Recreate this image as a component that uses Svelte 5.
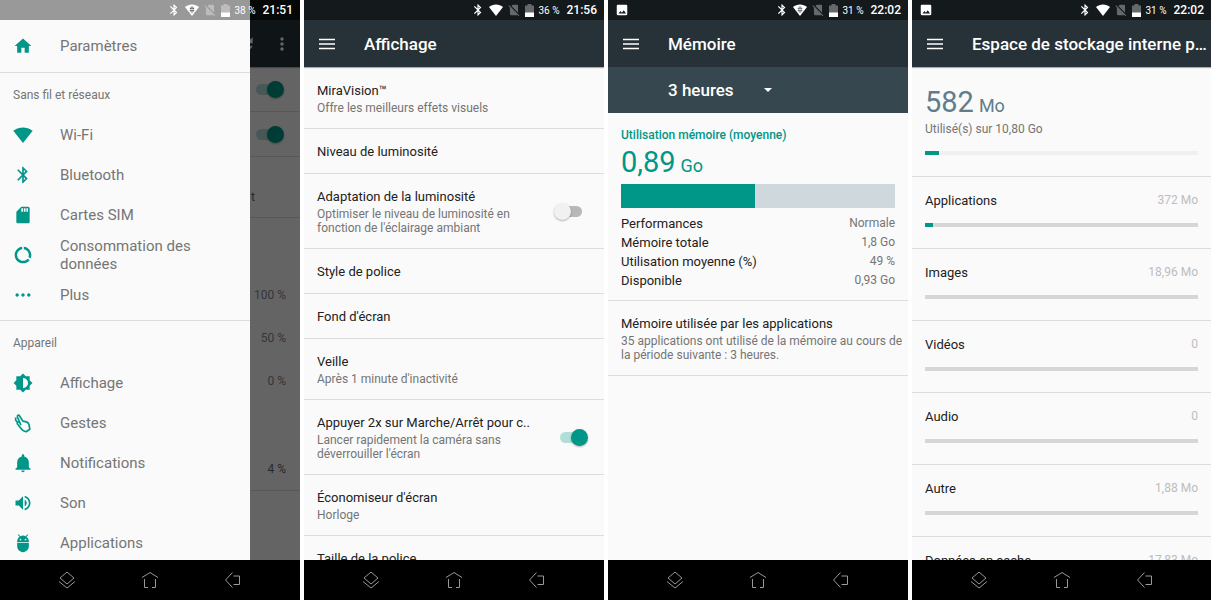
<script lang="ts">
    type Status = { battery: number; time: string; picture: boolean; wifiData: boolean };
    type Entry = { icon: string; label: string };
    type Setting = { title: string; summary?: string; toggle?: boolean; checked?: boolean };

    const icons: Record<string, string> = {
        home: 'M10 20v-6h4v6h5v-8h3L12 3 2 12h3v8z',
        wifi: 'M12.01 21.49L23.64 7c-.45-.34-4.93-4-11.64-4C5.28 3 .81 6.66.36 7l11.63 14.49.01.01.01-.01z',
        bluetooth: 'M17.71 7.71L12 2h-1v7.59L6.41 5 5 6.41 10.59 12 5 17.59 6.41 19 11 14.41V22h1l5.71-5.71-4.3-4.29 4.3-4.29zM13 5.83l1.88 1.88L13 9.59V5.83zm1.88 10.46L13 18.17v-3.76l1.88 1.88z',
        sim: 'M18 2h-8L4.02 8 4 20c0 1.1.9 2 2 2h12c1.1 0 2-.9 2-2V4c0-1.1-.9-2-2-2zm-6 6h-2V4h2v4zm3 0h-2V4h2v4zm3 0h-2V4h2v4z',
        data: 'M13 2.05v3.03c3.39.49 6 3.39 6 6.92 0 .9-.18 1.75-.48 2.54l2.6 1.53c.56-1.24.88-2.62.88-4.07 0-5.18-3.95-9.45-9-9.95zM12 19c-3.87 0-7-3.13-7-7 0-3.53 2.61-6.43 6-6.92V2.05c-5.06.5-9 4.76-9 9.95 0 5.52 4.47 10 9.99 10 3.31 0 6.24-1.61 8.06-4.09l-2.6-1.53C16.17 17.98 14.21 19 12 19z',
        more: 'M5 10c-1.1 0-2 .9-2 2s.9 2 2 2 2-.9 2-2-.9-2-2-2zm14 0c-1.1 0-2 .9-2 2s.9 2 2 2 2-.9 2-2-.9-2-2-2zm-7 0c-1.1 0-2 .9-2 2s.9 2 2 2 2-.9 2-2-.9-2-2-2z',
        display: 'M20 15.31L23.31 12 20 8.69V4h-4.69L12 .69 8.69 4H4v4.69L.69 12 4 15.31V20h4.69L12 23.31 15.31 20H20v-4.69zM12 18V6c3.31 0 6 2.69 6 6s-2.69 6-6 6z',
        bell: 'M12 23c1.1 0 1.99-.89 1.99-1.99h-3.98c0 1.1.89 1.99 1.99 1.99zm7-6v-6c0-3.35-2.36-6.15-5.5-6.83V3c0-.83-.67-1.5-1.5-1.5s-1.5.67-1.5 1.5v1.17C7.36 4.85 5 7.65 5 11v6l-2 2v1h18v-1l-2-2z',
        sound: 'M3 9v6h4l5 5V4L7 9H3zm13.5 3c0-1.77-1.02-3.29-2.5-4.03v8.05c1.48-.73 2.5-2.25 2.5-4.02zM14 3.23v2.06c2.89.86 5 3.54 5 6.71s-2.11 5.85-5 6.71v2.06c4.01-.91 7-4.49 7-8.77s-2.99-7.86-7-8.77z',
        apps: 'M5 16c0 3.87 3.13 7 7 7s7-3.13 7-7v-4H5v4zM16.12 4.37l2.1-2.1-.82-.83-2.3 2.31C14.16 3.28 13.12 3 12 3s-2.16.28-3.09.75L6.6 1.44l-.82.83 2.1 2.1C6.14 5.64 5 7.68 5 10v1h14v-1c0-2.32-1.14-4.36-2.88-5.63zM9 9c-.55 0-1-.45-1-1s.45-1 1-1 1 .45 1 1-.45 1-1 1zm6 0c-.55 0-1-.45-1-1s.45-1 1-1 1 .45 1 1-.45 1-1 1z',
        noSim: 'M18.99 5c0-1.1-.89-2-1.99-2h-7L7.66 5.34 19 16.68 18.99 5zM3.65 3.88L2.38 5.15 5 7.77V19c0 1.1.9 2 2 2h10.01c.35 0 .67-.1.96-.26l1.88 1.88 1.27-1.27L3.65 3.88z',
        picture: 'M21 19V5c0-1.1-.9-2-2-2H5c-1.1 0-2 .9-2 2v14c0 1.1.9 2 2 2h14c1.1 0 2-.9 2-2zM6 18l3.5-4.5 2.5 3 3-4 4 5.5z',
        refresh: 'M17.65 6.35C16.2 4.9 14.21 4 12 4c-4.42 0-8 3.58-8 8s3.58 8 8 8c3.73 0 6.84-2.55 7.73-6h-2.08c-.82 2.33-3.04 4-5.65 4-3.31 0-6-2.69-6-6s2.69-6 6-6c1.66 0 3.14.69 4.22 1.78L13 11h7V4l-2.35 2.35z',
        kebab: 'M12 8c1.1 0 2-.9 2-2s-.9-2-2-2-2 .9-2 2 .9 2 2 2zm0 2c-1.1 0-2 .9-2 2s.9 2 2 2 2-.9 2-2-.9-2-2-2zm0 6c-1.1 0-2 .9-2 2s.9 2 2 2 2-.9 2-2-.9-2-2-2z'
    };

    const sections: Array<{ title: string; entries: Entry[] }> = [
        {
            title: 'Sans fil et réseaux',
            entries: [
                { icon: 'wifi', label: 'Wi-Fi' },
                { icon: 'bluetooth', label: 'Bluetooth' },
                { icon: 'sim', label: 'Cartes SIM' },
                { icon: 'data', label: 'Consommation des données' },
                { icon: 'more', label: 'Plus' }
            ]
        },
        {
            title: 'Appareil',
            entries: [
                { icon: 'display', label: 'Affichage' },
                { icon: 'gesture', label: 'Gestes' },
                { icon: 'bell', label: 'Notifications' },
                { icon: 'sound', label: 'Son' },
                { icon: 'apps', label: 'Applications' }
            ]
        }
    ];

    const settings: Setting[] = $state([
        { title: 'MiraVision™', summary: 'Offre les meilleurs effets visuels' },
        { title: 'Niveau de luminosité' },
        {
            title: 'Adaptation de la luminosité',
            summary: "Optimiser le niveau de luminosité en fonction de l'éclairage ambiant",
            toggle: true,
            checked: false
        },
        { title: 'Style de police' },
        { title: "Fond d'écran" },
        { title: 'Veille', summary: "Après 1 minute d'inactivité" },
        {
            title: 'Appuyer 2x sur Marche/Arrêt pour c..',
            summary: "Lancer rapidement la caméra sans déverrouiller l'écran",
            toggle: true,
            checked: true
        },
        { title: "Économiseur d'écran", summary: 'Horloge' },
        { title: 'Taille de la police' }
    ]);

    const memory = [
        ['Performances', 'Normale'],
        ['Mémoire totale', '1,8 Go'],
        ['Utilisation moyenne (%)', '49 %'],
        ['Disponible', '0,93 Go']
    ];

    const storage = [
        { name: 'Applications', size: '372 Mo', percent: 3 },
        { name: 'Images', size: '18,96 Mo', percent: 0 },
        { name: 'Vidéos', size: '0', percent: 0 },
        { name: 'Audio', size: '0', percent: 0 },
        { name: 'Autre', size: '1,88 Mo', percent: 0 },
        { name: 'Données en cache', size: '17,83 Mo', percent: 0 }
    ];

    let period = $state('3 heures');
</script>

{#snippet icon(name: string)}
    <svg class="icon" viewBox="0 0 24 24" aria-hidden="true">
        {#if name === 'gesture'}
            <path
                d="M9.5 14.5L5.3 4.8C4.7 2.8 7 1.8 8 3.6l3.800 6.200 4.200.9c1.700.4 2.700 1.600 3.200 3.200l1 5.600-4.400 3c-3-.3-4.800-1.700-6.200-4L5.200 12.800c-.6-1.800 1-2.700 2.300-1.600M3.200 5.500v3.200l1.800 2"
                fill="none"
                stroke="currentColor"
                stroke-width="2"
                stroke-linejoin="round"
            />
        {:else}
            <path d={icons[name]} fill="currentColor" />
        {/if}
    </svg>
{/snippet}

{#snippet statusBar(status: Status)}
    <div class="status">
        {#if status.picture}
            <span class="picture">{@render icon('picture')}</span>
        {/if}
        <span class="bt">{@render icon('bluetooth')}</span>
        <svg class="signal" viewBox="0 0 14 12" aria-hidden="true">
            <path d="M7 12L0 3C3.5-.4 10.5-.4 14 3z" fill="currentColor" />
            {#if status.wifiData}
                <path d="M7 2.500l2 2.200H5zM7 8.500l2-2.200H5z" fill="none" stroke="#444" stroke-width=".8" />
            {/if}
        </svg>
        <span class="no-sim">{@render icon('noSim')}</span>
        <svg class="battery" viewBox="0 0 9 13" aria-hidden="true">
            <path d="M2.5 0h4v1.500H9V13H0V1.500h2.500z" fill="currentColor" opacity=".35" />
            <path d="M0 8.500h9V13H0z" fill="currentColor" />
        </svg>
        <span class="percent">{status.battery} %</span>
        <time>{status.time}</time>
    </div>
{/snippet}

{#snippet appBar(title: string)}
    <header>
        <button class="menu" aria-label="Menu">
            <svg viewBox="0 0 16 12" aria-hidden="true">
                <path d="M0 1.500h16M0 6h16M0 10.500h16" stroke="currentColor" stroke-width="1.600" />
            </svg>
        </button>
        <h1>{title}</h1>
    </header>
{/snippet}

{#snippet navBar()}
    <nav class="keys" aria-label="Navigation">
        <button aria-label="Applications récentes">
            <svg viewBox="0 0 18 18">
                <path d="M9 1l7 6-7 6-7-6zM1 10.500l8 6.500 8-6.500" />
            </svg>
        </button>
        <button aria-label="Accueil">
            <svg viewBox="0 0 18 18">
                <path d="M1 6.500l8-5 8 5M3.500 8v8.500H7M14.500 8v8.500H11" />
            </svg>
        </button>
        <button aria-label="Retour">
            <svg viewBox="0 0 18 18">
                <path d="M8.500 1.500L1.500 9l7 7.500M9.500 5h6v8.500h-6" />
            </svg>
        </button>
    </nav>
{/snippet}

<main>
    <section class="phone">
        {@render statusBar({ battery: 38, time: '21:51', picture: false, wifiData: true })}
        <div class="screen battery-page">
            <header>
                {@render icon('refresh')}
                {@render icon('kebab')}
            </header>
            <div class="line"><input type="checkbox" class="switch" checked aria-label="Économie" /></div>
            <div class="line"><input type="checkbox" class="switch" checked aria-label="Veille" /></div>
            <div class="line tail">t</div>
            <div class="chart">
                <span>100 %</span>
                <span>50 %</span>
                <span>0 %</span>
            </div>
            <div class="line usage">4 %</div>
        </div>
        <div class="scrim"></div>
        <aside class="drawer">
            <a class="entry home" href="#parametres">
                {@render icon('home')}
                <span>Paramètres</span>
            </a>
            {#each sections as section (section.title)}
                <div class="group">
                    <h2>{section.title}</h2>
                    {#each section.entries as entry (entry.label)}
                        <a class="entry" href="#{entry.icon}">
                            {@render icon(entry.icon)}
                            <span>{entry.label}</span>
                        </a>
                    {/each}
                </div>
            {/each}
        </aside>
        {@render navBar()}
    </section>

    <section class="phone">
        {@render statusBar({ battery: 36, time: '21:56', picture: false, wifiData: false })}
        {@render appBar('Affichage')}
        <div class="screen settings">
            {#each settings as item (item.title)}
                <label class="setting">
                    <span class="text">
                        <span class="title">{item.title}</span>
                        {#if item.summary}
                            <span class="summary">{item.summary}</span>
                        {/if}
                    </span>
                    {#if item.toggle}
                        <input type="checkbox" class="switch" bind:checked={item.checked} />
                    {/if}
                </label>
            {/each}
        </div>
        {@render navBar()}
    </section>

    <section class="phone">
        {@render statusBar({ battery: 31, time: '22:02', picture: true, wifiData: true })}
        {@render appBar('Mémoire')}
        <div class="period">
            <select aria-label="Période" bind:value={period}>
                <option>3 heures</option>
            </select>
            <svg viewBox="0 0 8 4" aria-hidden="true"><path d="M0 0h8L4 4z" fill="currentColor" /></svg>
        </div>
        <div class="screen">
            <div class="memory">
                <h2>Utilisation mémoire (moyenne)</h2>
                <p class="amount"><span>0,89</span><small>Go</small></p>
                <div class="gauge"><div style:width="49%"></div></div>
                <table>
                    <tbody>
                        {#each memory as [name, value] (name)}
                            <tr><th scope="row">{name}</th><td>{value}</td></tr>
                        {/each}
                    </tbody>
                </table>
            </div>
            <div class="setting wide">
                <span class="text">
                    <span class="title">Mémoire utilisée par les applications</span>
                    <span class="summary">35 applications ont utilisé de la mémoire au cours de la période suivante : 3 heures.</span>
                </span>
            </div>
        </div>
        {@render navBar()}
    </section>

    <section class="phone">
        {@render statusBar({ battery: 31, time: '22:02', picture: true, wifiData: false })}
        {@render appBar('Espace de stockage interne p…')}
        <div class="screen">
            <div class="total">
                <p class="amount"><span>582</span><small>Mo</small></p>
                <p class="summary">Utilisé(s) sur 10,80 Go</p>
                <div class="bar light"><div style:width="5%"></div></div>
            </div>
            {#each storage as item (item.name)}
                <div class="store">
                    <div class="names">
                        <span class="title">{item.name}</span>
                        <span class="size">{item.size}</span>
                    </div>
                    <div class="bar"><div style:width="{item.percent}%"></div></div>
                </div>
            {/each}
        </div>
        {@render navBar()}
    </section>
</main>

<style>
    :global(body) {
        background: #fff;
        font-family: Roboto, "Noto Sans", sans-serif;
    }

    main {
        display: grid;
        grid-template-columns: 300fr 300fr 300fr 299fr;
        gap: 4px;
        height: 100vh;
        overflow: hidden;
    }

    h1, h2, p {
        margin: 0;
    }

    button {
        display: flex;
        padding: 0;
        border: none;
        background: none;
        color: inherit;
        cursor: pointer;
    }

    a {
        color: inherit;
        text-decoration: none;
    }

    .icon {
        display: block;
        flex: none;
        width: 20px;
        height: 20px;
    }

    .phone {
        position: relative;
        display: flex;
        flex-direction: column;
        min-width: 0;
        min-height: 0;
        overflow: hidden;
        background: #fafafa;
    }

    .screen {
        flex: 1;
        min-height: 0;
        overflow: hidden;
    }

    /* status bar */
    .status {
        position: relative;
        z-index: 2;
        display: flex;
        flex: none;
        align-items: center;
        justify-content: flex-end;
        height: 20px;
        padding: 0 7px;
        background: #14191c;
        color: #fff;

        .icon {
            width: 14px;
            height: 14px;
        }

        .picture {
            margin-right: auto;
        }

        .bt {
            margin-right: 4px;
        }

        .signal {
            width: 14px;
            height: 12px;
            margin-right: 4px;
        }

        .no-sim {
            margin-right: 4px;
            opacity: 0.35;
        }

        .battery {
            width: 9px;
            height: 13px;
            margin-right: 5px;
        }

        .percent {
            margin-right: 7px;
            font-size: 10px;
        }

        time {
            font-size: 12px;
            font-weight: 500;
        }
    }

    .battery-page ~ .scrim {
        position: absolute;
        inset: 0;
        background: rgba(0, 0, 0, 0.6);
    }

    .phone:first-child .status {
        background: linear-gradient(90deg, #999 250px, #060707 250px);
    }

    header {
        display: flex;
        flex: none;
        align-items: center;
        height: 47px;
        padding-left: 15px;
        background: #263238;
        box-shadow: 0 1px 1px rgba(0, 0, 0, 0.3);
        color: #fff;
    }

    h1 {
        padding-left: 29px;
        overflow: hidden;
        font-size: 17px;
        font-weight: 500;
        line-height: 22px;
        white-space: nowrap;
    }

    .menu svg {
        width: 16px;
        height: 12px;
    }

    /* page behind the drawer */
    .battery-page {
        header {
            justify-content: flex-end;
            gap: 16px;
            padding-right: 8px;
        }

        .line {
            display: flex;
            align-items: center;
            justify-content: flex-end;
            box-sizing: border-box;
            height: 45px;
            padding-right: 16px;
            border-bottom: 1px solid #ddd;
            color: #666;
            font-size: 12px;
        }

        .tail {
            height: 61px;
            padding: 20px 45px 0 0;
        }

        .chart {
            display: grid;
            grid-auto-rows: 43px;
            align-items: center;
            padding: 55px 14px 0 0;
            color: #888;
            font-size: 12px;
            text-align: right;
        }

        .usage {
            height: 89px;
            padding: 46px 14px 0 0;
        }
    }

    /* drawer */
    .drawer {
        position: absolute;
        inset: 0 auto 40px 0;
        width: 250px;
        padding-top: 20px;
        box-sizing: border-box;
        overflow: hidden;
        background: #fafafa;
        color: #757575;

        h2 {
            padding-left: 13px;
            font-size: 12px;
            font-weight: 400;
            line-height: 44px;
            height: 42px;
        }
    }

    .entry {
        display: flex;
        align-items: center;
        gap: 27px;
        height: 40px;
        padding: 0 40px 0 13px;
        font-size: 15px;
        line-height: 18px;

        .icon {
            color: #009688;
        }
    }

    .home {
        height: 52px;
        border-bottom: 1px solid #ddd;
    }

    .group {
        padding-bottom: 5px;
        border-bottom: 1px solid #ddd;
    }

    /* preference rows */
    .settings {
        padding-top: 1px;
    }

    .setting {
        display: flex;
        align-items: center;
        justify-content: space-between;
        gap: 17px;
        padding: 14px 13px 13px;
        border-bottom: 1px solid #ddd;
    }

    .setting:has(.switch) {
        padding-right: 22px;
    }

    .wide {
        padding-right: 4px;
    }

    .title {
        display: block;
        color: #212121;
        font-size: 13px;
        line-height: 17px;
    }

    .summary {
        display: block;
        color: #757575;
        font-size: 12px;
        line-height: 14px;
    }

    .setting .summary {
        margin-top: 2px;
    }

    .switch {
        appearance: none;
        position: relative;
        flex: none;
        width: 22px;
        height: 11px;
        margin: 0;
        border-radius: 6px;
        background: #b8b8b8;
        cursor: pointer;
    }

    /* the thumb is larger than the track and hangs over its end */
    .switch::before {
        content: "";
        position: absolute;
        top: -3px;
        left: -6px;
        width: 17px;
        height: 17px;
        border-radius: 50%;
        background: #f1f1f1;
        box-shadow: 0 1px 2px rgba(0, 0, 0, 0.3);
    }

    .switch:checked {
        background: #b0dfda;
    }

    .switch:checked::before {
        right: -6px;
        left: auto;
        background: #009688;
    }

    .battery-page .switch {
        margin-right: 6px;
    }

    /* memory */
    .period {
        display: flex;
        flex: none;
        align-items: center;
        height: 46px;
        padding-left: 60px;
        background: #37474f;
        color: #fff;

        select {
            appearance: none;
            width: 96px;
            padding: 0;
            border: none;
            background: none;
            color: inherit;
            font: 500 17px Roboto, sans-serif;
        }

        svg {
            width: 8px;
            height: 4px;
        }
    }

    .memory {
        padding: 14px 13px 10px;
        border-bottom: 1px solid #ddd;
        color: #009688;

        h2 {
            margin-bottom: 3px;
            font-size: 12px;
            font-weight: 500;
            line-height: 16px;
        }
    }

    .amount {
        display: flex;
        align-items: baseline;
        gap: 5px;
        font-size: 29px;
        line-height: 32px;

        small {
            font-size: 18px;
            line-height: 20px;
        }
    }

    .gauge {
        height: 24px;
        margin: 6px 0;
        background: #cfd8dc;

        div {
            height: 100%;
            background: #009688;
        }
    }

    table {
        width: 100%;
        border-collapse: collapse;
        line-height: 19px;
    }

    th {
        padding: 0;
        color: #212121;
        font-size: 13px;
        font-weight: 400;
        text-align: left;
    }

    td {
        padding: 0;
        color: #757575;
        font-size: 12px;
        text-align: right;
    }

    /* storage */
    .total {
        padding: 19px 13px 21px;
        border-bottom: 1px solid #ddd;
        color: #607d8b;

        .summary {
            margin-top: 4px;
        }

        .bar {
            margin-top: 15px;
        }
    }

    .store {
        padding: 15px 13px 21px;
        border-bottom: 1px solid #ddd;

        .bar {
            margin-top: 14px;
        }
    }

    .names {
        display: flex;
        justify-content: space-between;
        line-height: 17px;
    }

    .size {
        color: #bdbdbd;
        font-size: 12px;
    }

    .bar {
        height: 4px;
        background: #d6d6d6;

        div {
            height: 100%;
            background: #009688;
        }
    }

    .light {
        background: #f0f0f0;
    }

    /* hardware keys */
    .keys {
        position: relative;
        display: flex;
        flex: none;
        align-items: center;
        justify-content: center;
        gap: 65px;
        height: 40px;
        background: #000;

        svg {
            width: 18px;
            height: 18px;
            fill: none;
            stroke: #999;
            stroke-width: 1;
        }
    }
</style>
